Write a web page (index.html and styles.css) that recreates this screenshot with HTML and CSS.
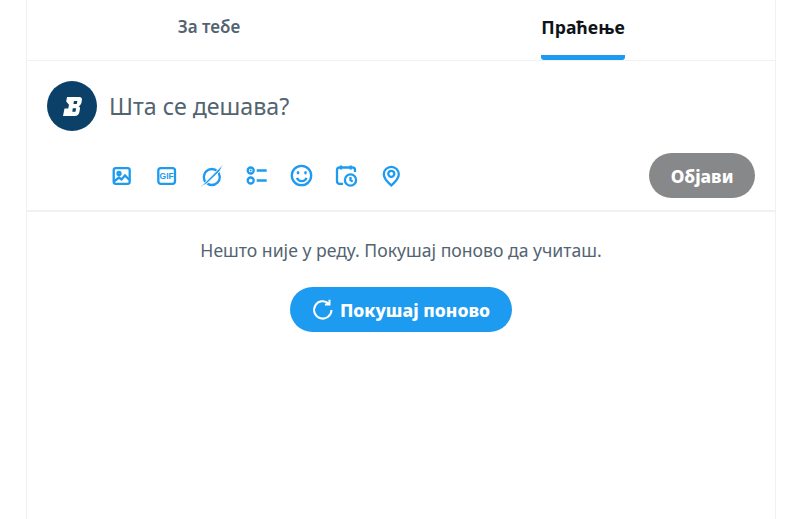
FILE: index.html
```html
<!DOCTYPE html>
<html lang="sr">
<head>
    <meta charset="utf-8">
    <title>Праћење</title>
    <link rel="stylesheet" href="styles.css">
</head>
<body>
    <div class="column">

        <!-- Tabs -->
        <div class="tabs">
            <a class="tab" href="#"><span class="tab_label">За тебе</span></a>
            <a class="tab active" href="#"><span class="tab_label">Праћење</span></a>
        </div>

        <!-- Composer -->
        <div class="composer">
            <div class="composer_top">
                <div class="avatar">
                    <svg width="19" height="19" viewBox="0 0 19 19">
                        <path fill="#fff" fill-rule="evenodd" d="M4 0H16.500C18.500 0 19.200 1.500 18.900 3.200L18.500 5.500C18.200 7 17.400 8.300 15.800 9.200C16.900 9.900 17.200 11 16.900 12.300L16.400 15C15.900 17.700 14.300 19 11.800 19H0L1.500 11.500H5.200L6 7.800L3.200 4.500ZM10.900 4L10.500 6.900H13.800L14.300 4ZM9.800 11.300L9.300 14.800H12.500L13.100 11.300Z"/>
                    </svg>
                </div>
                <div class="composer_input">Шта се дешава?</div>
            </div>
            <div class="composer_bottom">
                <div class="tools">
                    <svg class="tool" viewBox="0 0 22 22"><rect x="2.700" y="3.200" width="16" height="15.600" rx="2"/><circle cx="8" cy="8.500" r="1.500"/><path d="M3 16.500L8 12.500L10.500 14.500L14 10.500L18.500 15"/></svg>
                    <svg class="tool" viewBox="0 0 22 22"><rect x="2.300" y="3.200" width="16.700" height="15.600" rx="2.500"/><text class="gif" x="10.700" y="14">GIF</text></svg>
                    <svg class="tool" viewBox="0 0 22 22"><circle cx="10.800" cy="12" r="8"/><path class="sliver" d="M-1.500 23L22.500 -1L19 6L6 18.500Z"/></svg>
                    <svg class="tool" viewBox="0 0 22 22"><circle cx="4.700" cy="5.500" r="3"/><circle class="dot" cx="4.700" cy="5.500" r="1"/><circle cx="4.700" cy="15.500" r="3"/><path d="M10.700 5.500H20.700M10.700 15.500H20.700"/></svg>
                    <svg class="tool" viewBox="0 0 22 22"><circle cx="10.500" cy="10.500" r="9.700"/><path d="M6 12.800C7.500 17.200 14 17.200 15.500 12.800"/><ellipse class="dot" cx="7" cy="7.800" rx="1.300" ry="1.800"/><ellipse class="dot" cx="14.500" cy="7.800" rx="1.300" ry="1.800"/></svg>
                    <svg class="tool" viewBox="0 0 22 22"><path d="M7 18.800H3.500C2 18.800 1 17.800 1 16.300V5C1 3.500 2 2.500 3.500 2.500H16.500C18 2.500 19 3.500 19 5V7M5 0.500V4.500M14.700 0.500V4.500"/><circle cx="14.500" cy="15" r="5.600"/><path d="M14.500 12V15.200L16.700 16.500"/></svg>
                    <svg class="tool" viewBox="0 0 22 22"><path d="M10.300 20.500C7.500 18 2.800 14 2.800 9.300A7.500 7.500 0 0 1 17.800 9.300C17.800 14 13 18 10.300 20.500Z"/><circle cx="10.300" cy="8.800" r="3"/></svg>
                </div>
                <button class="post_btn" type="button">Објави</button>
            </div>
        </div>

        <!-- Error -->
        <div class="error_box">
            <p class="error_text">Нешто није у реду. Покушај поново да учиташ.</p>
            <button class="retry_btn" type="button">
                <svg width="22" height="22" viewBox="0 0 22 22"><path d="M19.500 11A8.700 8.700 0 1 1 16.700 4.500M17.500 0.800V5.400H12.900"/></svg>
                Покушај поново
            </button>
        </div>

    </div>
</body>
</html>
```

FILE: styles.css
```css
* {
    box-sizing: border-box;
}

html, body {
    height: 100%;
}

body {
    margin: 0;
    background-color: #fff;
    font-family: "Noto Sans", "Open Sans", sans-serif;
    overflow: hidden;
}

.column {
    width: 750px;
    min-height: 100%;
    margin-left: 26px;
    border-left: 1px solid #eff1f3;
    border-right: 1px solid #eff1f3;
}

/* Tabs */
.tabs {
    display: grid;
    grid-template-columns: 1fr 1fr;
    height: 61px;
    border-bottom: 1px solid #eff1f3;
}

.tab {
    display: flex;
    justify-content: center;
    color: #536471;
    font-size: 17px;
    font-weight: 600;
    text-decoration: none;
}

.tab_label {
    height: 60px;
    margin-right: 10px;
    padding-top: 15px;
    line-height: 24px;
}

.tab.active {
    color: #0f1419;
    font-size: 17.6px;
    font-weight: 700;
}

.tab.active .tab_label {
    border-bottom: 5px solid #1d9bf0;
    border-radius: 0 0 3px 3px;
}

/* Composer */
.composer {
    height: 151px;
    padding: 20px 20px 0;
    border-bottom: 2px solid #eff1f3;
}

.composer_top {
    display: flex;
    align-items: center;
    gap: 12px;
}

.avatar {
    display: flex;
    align-items: center;
    justify-content: center;
    width: 50px;
    height: 50px;
    border-radius: 50%;
    background-color: #0b4168;
}

.composer_input {
    color: #536471;
    font-size: 23.2px;
    line-height: 50px;
}

.composer_bottom {
    display: flex;
    align-items: center;
    justify-content: space-between;
    margin-top: 22px;
    padding-left: 64px;
}

.tools {
    display: flex;
    align-items: center;
    gap: 23px;
}

.tool {
    width: 22px;
    height: 22px;
    overflow: visible;
    fill: none;
    stroke: #1d9bf0;
    stroke-width: 2.3;
}

.tool .sliver {
    fill: #1d9bf0;
    stroke: #fff;
    stroke-width: 1;
}

.tool .dot {
    fill: #1d9bf0;
    stroke: none;
}

.tool .gif {
    fill: #1d9bf0;
    stroke: none;
    font-family: "Liberation Sans", sans-serif;
    font-size: 8.5px;
    font-weight: 700;
    text-anchor: middle;
}

.post_btn {
    width: 106px;
    height: 45px;
    border: none;
    border-radius: 23px;
    background-color: #87888a;
    color: #fff;
    font-family: inherit;
    font-size: 17.4px;
    font-weight: 800;
}

/* Error */
.error_box {
    display: flex;
    flex-direction: column;
    align-items: center;
    padding-top: 26px;
}

.error_text {
    margin: 0;
    color: #536471;
    font-size: 17.6px;
    line-height: 24px;
}

.retry_btn {
    display: flex;
    align-items: center;
    justify-content: center;
    gap: 6px;
    width: 222px;
    height: 45px;
    margin-top: 25px;
    border: none;
    border-radius: 23px;
    background-color: #1d9bf0;
    color: #fff;
    font-family: inherit;
    font-size: 17.6px;
    font-weight: 800;
}

.retry_btn svg {
    fill: none;
    stroke: #fff;
    stroke-width: 2;
}
```
